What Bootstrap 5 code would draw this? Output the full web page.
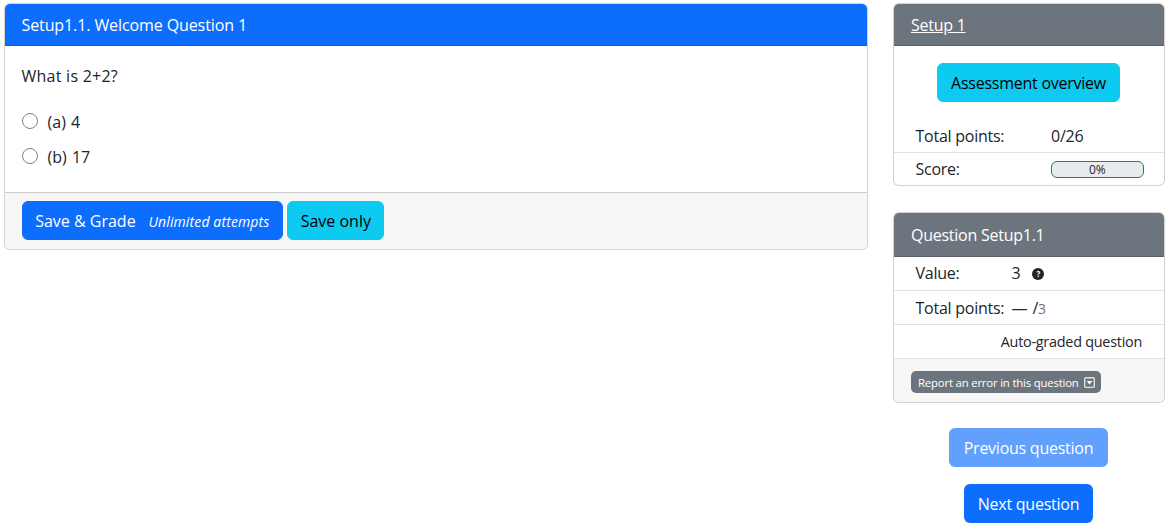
<!doctype html>
<html lang="en">
<head>
<meta charset="utf-8">
<title>Question</title>
<link rel="stylesheet" href="https://cdn.jsdelivr.net/npm/bootstrap@5.3.0/dist/css/bootstrap.min.css">
<style>
html,body{overflow:hidden;}
body{font-family:"Open Sans","Noto Sans",sans-serif;font-size:16px;letter-spacing:-.25px;color:#212529;background:#fff;}
.page-wrap{display:flex;gap:25px;padding:3px 5px 0 3.5px;align-items:flex-start;}
.main-col{width:864px;flex:none;}
.side-col{width:272px;flex:none;}
.card-header{padding:8.6px 17.5px 7.4px;height:42px;line-height:25px;}
.head-wide{letter-spacing:-.1px;padding-left:17px;}
.q-body{padding:16.5px 17px 0;height:146px;}
.q-text{margin:0 0 16px;line-height:26px;height:26px;letter-spacing:.25px;}
.opt-row{display:flex;align-items:center;height:35px;margin:0;letter-spacing:.05px;}
.opt-row .form-check-input{margin:0 10px 2px 0;width:16px;height:16px;flex:none;border-color:#7d8287;}
.opt-row .lbl{margin-right:5px;}
.q-foot{padding:8px 17px 9px;background:#f7f7f7;display:flex;gap:4px;}
.q-btn{height:39px;padding:0 12.5px;line-height:38.5px;border-radius:6px;white-space:nowrap;}
.attempts{font-size:14px;font-style:italic;margin-left:8.6px;letter-spacing:.13px;}
.q-foot .btn-primary{padding:0 12.7px;}
.ov-btn{padding:0 13px;}
.side-title{color:#fff;}
.ov-wrap{display:flex;justify-content:center;padding:17px 0 19px;}
.info-row{display:flex;align-items:center;padding:0 22px;border-bottom:1px solid #dee2e6;}
.info-row:last-child{border-bottom:0;}
.row-33{height:33px;}
.row-34{height:34px;padding-top:1px;}
.lab-a{width:135.5px;flex:none;}
.lab-b{width:96px;flex:none;}
.score-bar{width:92.5px;height:17px;border:1px solid #198754;border-radius:6px;background:#e9ecef;font-size:12px;line-height:15px;text-align:center;flex:none;}
.card-a{height:183px;margin-bottom:26px;}
.card-b{height:191px;}
.card-b .card-header{height:43.5px;line-height:26px;padding:9px 17.5px;}
.tall{height:34.5px;}
.tall-first{height:35px;}
.help-dot{display:inline-flex;align-items:center;justify-content:center;width:12px;height:12px;border-radius:50%;background:#212529;color:#fff;font-size:8px;font-weight:700;letter-spacing:0;margin-left:12px;position:relative;top:1px;}
.dash{letter-spacing:1px;}
.of-tot{color:#6c757d;font-size:14px;}
.total-row{padding-top:1px;}
.auto-row{font-size:14.4px;justify-content:flex-end;padding:1px 21.5px 0 0;}
.side-foot{display:flex;align-items:flex-start;padding:12.5px 17.5px 0;background:#f7f7f7;height:43.5px;border-top:0;}
.rep-btn{display:inline-flex;align-items:center;gap:5px;height:21.5px;padding:0 6.5px 0 7px;font-size:11.4px;color:#fff;background:#6c757d;border-radius:5px;letter-spacing:-.2px;}
.nav-stack{display:flex;flex-direction:column;align-items:center;gap:17px;margin-top:25px;}
.nav-stack .q-btn{border:0;line-height:40px;padding:0 14.25px;}
.nav-stack .btn.disabled{opacity:.65;}
</style>
</head>
<body>
<div class="page-wrap">
  <div class="main-col">
    <div class="card">
      <div class="card-header bg-primary text-white head-wide">Setup1.1. Welcome Question 1</div>
      <div class="q-body">
        <p class="q-text">What is 2+2?</p>
        <label class="opt-row"><input class="form-check-input" type="radio" name="q"><span class="lbl">(a)</span><span>4</span></label>
        <label class="opt-row"><input class="form-check-input" type="radio" name="q"><span class="lbl">(b)</span><span>17</span></label>
      </div>
      <div class="card-footer q-foot">
        <button class="btn btn-primary q-btn">Save &amp; Grade <span class="attempts">Unlimited attempts</span></button>
        <button class="btn btn-info q-btn">Save only</button>
      </div>
    </div>
  </div>
  <div class="side-col">
    <div class="card card-a">
      <div class="card-header bg-secondary"><a class="side-title" href="#">Setup 1</a></div>
      <div class="ov-wrap"><a class="btn btn-info q-btn ov-btn" href="#">Assessment overview</a></div>
      <div class="info-row row-33"><div class="lab-a">Total points:</div><div>0/26</div></div>
      <div class="info-row row-34"><div class="lab-a">Score:</div><div class="score-bar">0%</div></div>
    </div>
    <div class="card card-b">
      <div class="card-header bg-secondary text-white">Question Setup1.1</div>
      <div class="info-row tall-first"><div class="lab-b">Value:</div><div>3</div><span class="help-dot">?</span></div>
      <div class="info-row tall total-row"><div class="lab-b">Total points:</div><div><span class="dash">—</span> <span>/</span><span class="of-tot">3</span></div></div>
      <div class="info-row tall auto-row">Auto-graded question</div>
      <div class="card-footer side-foot">
        <span class="rep-btn">Report an error in this question
          <svg width="11" height="11" viewBox="0 0 16 16" aria-hidden="true"><rect x="1" y="1" width="14" height="14" rx="1.5" fill="none" stroke="#dfe1e3" stroke-width="2"/><path d="M3.8 5.8h8.4L8 11z" fill="#fff"/></svg>
        </span>
      </div>
    </div>
    <div class="nav-stack">
      <a class="btn btn-primary q-btn disabled" href="#">Previous question</a>
      <a class="btn btn-primary q-btn" href="#">Next question</a>
    </div>
  </div>
</div>
<script src="https://cdn.jsdelivr.net/npm/bootstrap@5.3.0/dist/js/bootstrap.bundle.min.js"></script>
</body>
</html>
